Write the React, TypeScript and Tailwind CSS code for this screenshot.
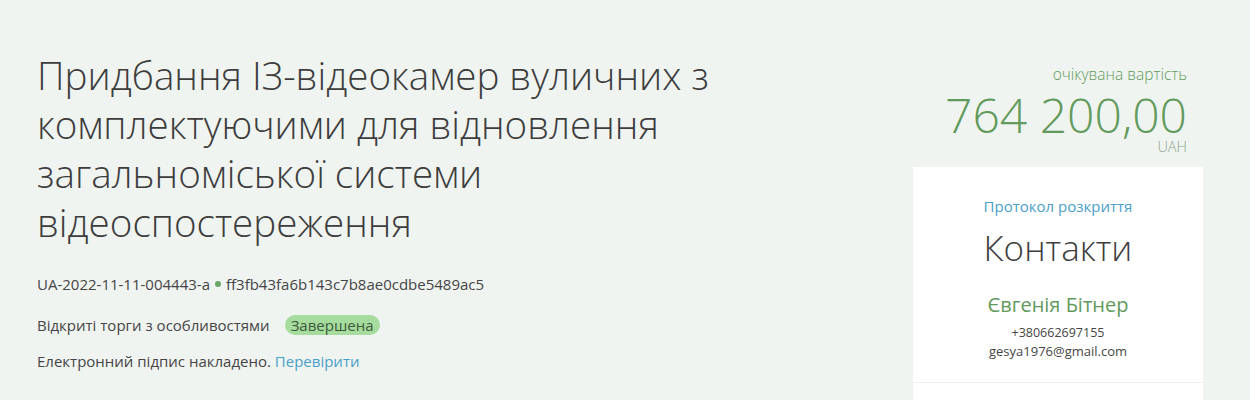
import React from 'react';

const Title: React.FC = () => (
  <h1 className="text-[38.6px] leading-[49px] font-light text-[#3d3d3d] max-w-[720px]">
    Придбання ІЗ-відеокамер вуличних з комплектуючими для відновлення загальноміської системи відеоспостереження
  </h1>
);

const App: React.FC = () => {
  return (
    <div
      className="w-[1250px] h-[400px] overflow-hidden bg-[#f0f4f1] flex px-[37px] pt-[51px]"
      style={{ fontFamily: '"Open Sans", "Noto Sans", sans-serif' }}
    >
      <div className="flex-1">
        <Title />
        <div className="mt-[27px] text-[15px] text-[#454545] flex items-center gap-[5px] leading-[20px]">
          <span>UA-2022-11-11-004443-a</span>
          <span className="inline-block w-[6px] h-[6px] rounded-full bg-[#6aa566]" />
          <span>ff3fb43fa6b143c7b8ae0cdbe5489ac5</span>
        </div>
        <div className="mt-[21px] text-[15px] text-[#454545] flex items-center leading-[20px]">
          <span>Відкриті торги з особливостями</span>
          <span className="ml-[15px] rounded-full bg-[#a6dc9d] px-[6px] text-[#3e5a3c]">Завершена</span>
        </div>
        <div className="mt-[16px] text-[15px] text-[#454545] leading-[20px]">
          Електронний підпис накладено. <span className="text-[#4aa0c8]">Перевірити</span>
        </div>
      </div>
      <div className="w-[290px] mr-[10px] flex flex-col">
        <div className="text-right pr-[16px] text-[#629a5c] font-light">
          <div className="text-[15.5px] leading-[20px] mt-[13px]">очікувана вартість</div>
          <div className="text-[48px] leading-[44px] mt-[9px]">764 200,00</div>
          <div className="text-[14.5px] leading-[16px] mt-[2px] text-[#8aa58a]">UAH</div>
        </div>
        <div className="mt-[12px] bg-white text-center flex-1">
          <div className="pt-[29px] text-[15px] leading-[20px] text-[#4aa0c8]">Протокол розкриття</div>
          <div className="mt-[10px] text-[35px] leading-[44px] font-light text-[#3d3d3d]">Контакти</div>
          <div className="mt-[22px] text-[20px] leading-[26px] text-[#629a5c]">Євгенія Бітнер</div>
          <div className="mt-[6px] text-[12.5px] leading-[18px] text-[#454545]">+380662697155</div>
          <div className="text-[13px] leading-[18px] text-[#454545]">gesya1976@gmail.com</div>
          <div className="mt-[22px] border-t border-[#eef0ee]" />
        </div>
      </div>
    </div>
  );
};

export default App;
